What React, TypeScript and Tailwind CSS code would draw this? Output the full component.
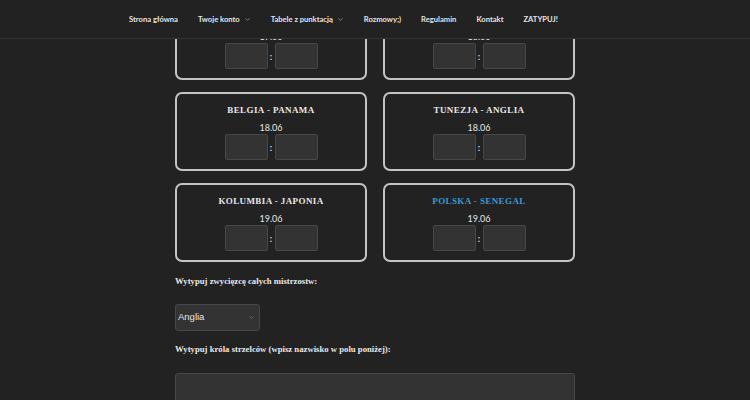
import { ChevronDown } from 'lucide-react';

type Match = { home: string; away: string; date: string; active?: boolean };

const navItems: { label: string; caret?: boolean }[] = [
    { label: 'Strona główna' },
    { label: 'Twoje konto', caret: true },
    { label: 'Tabele z punktacją', caret: true },
    { label: 'Rozmowy;)' },
    { label: 'Regulamin' },
    { label: 'Kontakt' },
    { label: 'ZATYPUJ!' },
];

const matches: Match[] = [
    { home: 'ROSJA', away: 'EGIPT', date: '17.06' },
    { home: 'SERBIA', away: 'KOSTARYKA', date: '18.06' },
    { home: 'BELGIA', away: 'PANAMA', date: '18.06' },
    { home: 'TUNEZJA', away: 'ANGLIA', date: '18.06' },
    { home: 'KOLUMBIA', away: 'JAPONIA', date: '19.06' },
    { home: 'POLSKA', away: 'SENEGAL', date: '19.06', active: true },
];

function MatchCard({ match }: { match: Match }) {
    return (
        <div className="h-[79px] rounded-[7px] border-2 border-[#c4c4c4] flex flex-col items-center pt-[10px]">
            <div
                className={`font-['Liberation_Serif',serif] font-bold text-[9px] tracking-[0.4px] leading-[12px] ${match.active ? 'text-[#3a9ad9]' : 'text-[#e8e8e8]'}`}
            >
                {match.home} - {match.away}
            </div>
            <div className="font-['Lato',sans-serif] text-[9px] text-[#e6e6e6] leading-[12px] mt-[6px]">{match.date}</div>
            <div className="flex items-center gap-[2px]">
                <div className="w-[43px] h-[26px] bg-[#333333] border border-[#474747] rounded-[2px]" />
                <span className="font-['Lato',sans-serif] text-[9px] font-bold text-[#ddd] w-[3px] text-center leading-none">:</span>
                <div className="w-[43px] h-[26px] bg-[#333333] border border-[#474747] rounded-[2px]" />
            </div>
        </div>
    );
}

export default function App() {
    return (
        <div className="w-[750px] h-[400px] overflow-hidden bg-[#222222] relative">
            {/* Nav */}
            <nav className="absolute top-0 left-0 right-0 h-[39px] bg-[#222222] border-b border-[#333333] z-10 flex items-center pl-[129px] font-['Lato',sans-serif] font-bold text-[7.6px] leading-[10px] text-[#e4e4e4]">
                <div className="flex items-center gap-[20px]">
                    {navItems.map((item) => (
                        <div key={item.label} className="flex items-center gap-[4px] whitespace-nowrap">
                            <span>{item.label}</span>
                            {item.caret && <ChevronDown size={7} strokeWidth={2} className="text-[#bbb]" />}
                        </div>
                    ))}
                </div>
            </nav>

            {/* Content */}
            <div className="w-[400px] ml-[175px] mt-[1px]">
                <div className="grid grid-cols-2 gap-x-[16px] gap-y-[12px]">
                    {matches.map((m) => (
                        <MatchCard key={m.home} match={m} />
                    ))}
                </div>

                <div className="mt-[13px] font-['Liberation_Serif',serif] font-bold text-[8.7px] text-[#e8e8e8] leading-[12px]">
                    Wytypuj zwycięzcę całych mistrzostw:
                </div>
                <div className="mt-[17px] w-[85px] h-[27px] bg-[#333333] border border-[#474747] rounded-[3px] flex items-center justify-between pl-[2px] pr-[4px]">
                    <span className="font-['Liberation_Sans',sans-serif] text-[9.5px] text-[#e6e6e6]">Anglia</span>
                    <ChevronDown size={7} strokeWidth={2} className="text-[#888]" />
                </div>
                <div className="mt-[12px] font-['Liberation_Serif',serif] font-bold text-[8.7px] text-[#e8e8e8] leading-[12px]">
                    Wytypuj króla strzelców (wpisz nazwisko w polu poniżej):
                </div>
                <div className="mt-[18px] w-[400px] h-[30px] bg-[#333333] border border-[#474747] rounded-[3px]" />
            </div>
        </div>
    );
}
